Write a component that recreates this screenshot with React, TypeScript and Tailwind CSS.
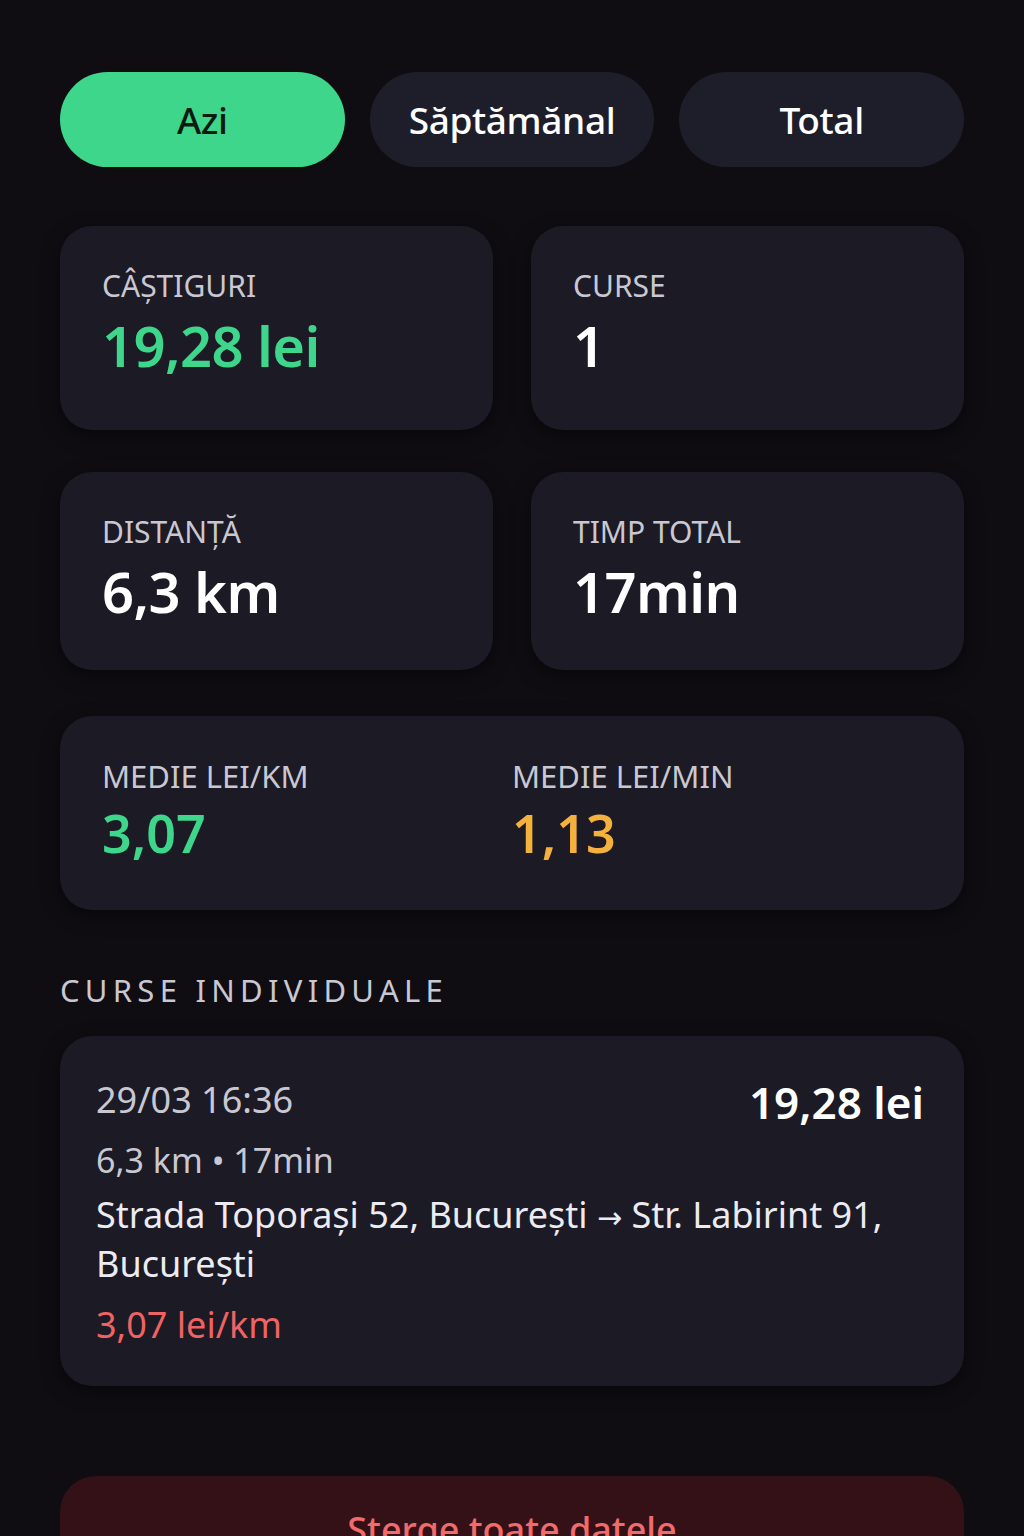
import React, { useState } from 'react';

type Period = 'azi' | 'saptamanal' | 'total';

const tabs: { id: Period; label: string }[] = [
  { id: 'azi', label: 'Azi' },
  { id: 'saptamanal', label: 'Săptămănal' },
  { id: 'total', label: 'Total' },
];

const StatCard: React.FC<{ label: string; value: string; valueClass: string; heightClass: string }> = ({
  label,
  value,
  valueClass,
  heightClass,
}) => (
  <div className={`bg-[#1b1a25] rounded-[32px] px-[42px] pt-[42px] shadow-[0_6px_18px_rgba(0,0,0,0.5)] ${heightClass}`}>
    <div className="text-[30px] leading-[36px] text-[#c9c8d2] uppercase">{label}</div>
    <div className={`text-[56px] leading-[70px] font-semibold tracking-[-0.01em] mt-[6px] ${valueClass}`}>{value}</div>
  </div>
);

export default function App() {
  const [period, setPeriod] = useState<Period>('azi');

  return (
    <div
      className="min-h-[1536px] bg-[#0f0d12] text-white px-[60px] pt-[72px] overflow-hidden"
      style={{ fontFamily: '"Noto Sans", "Open Sans", sans-serif' }}
    >
      {/* Period tabs */}
      <div className="grid grid-cols-3 gap-[25px]">
        {tabs.map((t) => (
          <button
            key={t.id}
            onClick={() => setPeriod(t.id)}
            className={`h-[95px] rounded-full text-[37px] font-medium tracking-[-0.01em] ${
              period === t.id ? 'bg-[#3dd68a] text-[#0c1a12]' : 'bg-[#1e1e2b] text-white'
            }`}
          >
            {t.label}
          </button>
        ))}
      </div>

      {/* Stats */}
      <div className="grid grid-cols-2 gap-x-[38px] gap-y-[42px] mt-[59px]">
        <StatCard label="Câștiguri" value="19,28 lei" valueClass="text-[#3dd68a]" heightClass="h-[204px]" />
        <StatCard label="Curse" value="1" valueClass="text-white" heightClass="h-[204px]" />
        <StatCard label="Distanță" value="6,3 km" valueClass="text-white" heightClass="h-[198px]" />
        <StatCard label="Timp total" value="17min" valueClass="text-white" heightClass="h-[198px]" />
      </div>

      <div className="mt-[46px] bg-[#1b1a25] rounded-[32px] h-[194px] px-[42px] pt-[42px] grid grid-cols-2 shadow-[0_6px_18px_rgba(0,0,0,0.5)]">
        <div>
          <div className="text-[31px] leading-[36px] text-[#c9c8d2]">MEDIE LEI/KM</div>
          <div className="text-[52px] leading-[66px] font-semibold mt-[6px] text-[#3dd68a]">3,07</div>
        </div>
        <div>
          <div className="text-[31px] leading-[36px] text-[#c9c8d2]">MEDIE LEI/MIN</div>
          <div className="text-[52px] leading-[66px] font-semibold mt-[6px] text-[#f5b13d]">1,13</div>
        </div>
      </div>

      {/* Rides */}
      <div className="mt-[60px] text-[31px] leading-[40px] tracking-[0.17em] text-[#c9c8d2]">CURSE INDIVIDUALE</div>

      <div className="mt-[26px] bg-[#1b1a25] rounded-[32px] h-[350px] px-[36px] pt-[38px] shadow-[0_6px_18px_rgba(0,0,0,0.5)]">
        <div className="flex justify-between items-start pr-[4px]">
          <div className="text-[36px] leading-[48px] text-[#c9c8d2] mt-[2px]">29/03 16:36</div>
          <div className="text-[44px] leading-[56px] font-semibold text-white">19,28 lei</div>
        </div>
        <div className="text-[34px] leading-[48px] text-[#c9c8d2] mt-[6px]">6,3 km • 17min</div>
        <div className="text-[36px] leading-[46px] text-[#ecebf2] mt-[8px] pr-[20px]">
          Strada Toporași 52, București{' '}
          <span style={{ fontFamily: '"DejaVu Sans", sans-serif' }} className="text-[30px]">→</span> Str. Labirint 91,
          București
        </div>
        <div className="text-[36px] leading-[48px] text-[#f06363] mt-[14px]">3,07 lei/km</div>
      </div>

      <button className="mt-[90px] w-full h-[120px] rounded-[36px] bg-[#341117] text-[#f06b6b] text-[36px] font-medium pb-[12px]">
        Șterge toate datele
      </button>
    </div>
  );
}
